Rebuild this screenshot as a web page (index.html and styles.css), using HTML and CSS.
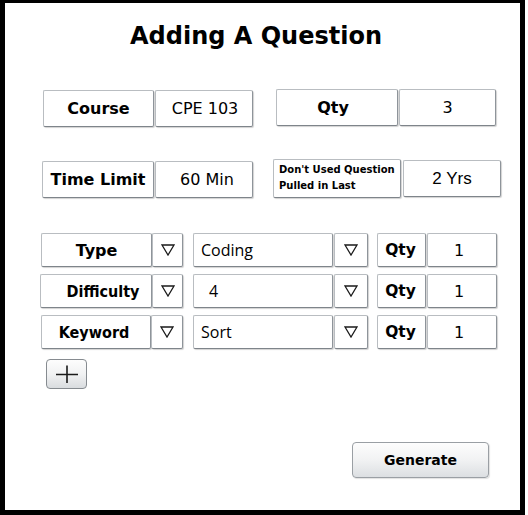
FILE: index.html
```html
<!DOCTYPE html>
<html>
<head>
<meta charset="utf-8">
<link rel="stylesheet" href="styles.css">
</head>
<body>
<div class="frame">
  <h1 class="title">Adding A Question</h1>

  <div class="row row1">
    <div class="box lbl course">Course</div>
    <div class="box val cpe">CPE 103</div>
    <div class="box lbl qty1">Qty</div>
    <div class="box val three">3</div>
  </div>

  <div class="row row2">
    <div class="box lbl time">Time Limit</div>
    <div class="box val min">60 Min</div>
    <div class="box lbl small dont">Don't Used Question<br>Pulled in Last</div>
    <div class="box val yrs">2 Yrs</div>
  </div>

  <div class="row crit first">
    <div class="box lbl clabel">Type</div>
    <div class="box tri"><svg width="14" height="12" viewBox="0 0 14 12"><polygon points="1,1 13,1 7,11" fill="none" stroke="#1a1a1a" stroke-width="1.3"/></svg></div>
    <div class="box field">Coding</div>
    <div class="box tri tri2"><svg width="14" height="12" viewBox="0 0 14 12"><polygon points="1,1 13,1 7,11" fill="none" stroke="#1a1a1a" stroke-width="1.3"/></svg></div>
    <div class="box lbl cqty">Qty</div>
    <div class="box val cnum">1</div>
  </div>

  <div class="row crit">
    <div class="box lbl clabel diff">Difficulty</div>
    <div class="box tri"><svg width="14" height="12" viewBox="0 0 14 12"><polygon points="1,1 13,1 7,11" fill="none" stroke="#1a1a1a" stroke-width="1.3"/></svg></div>
    <div class="box field indent">4</div>
    <div class="box tri tri2"><svg width="14" height="12" viewBox="0 0 14 12"><polygon points="1,1 13,1 7,11" fill="none" stroke="#1a1a1a" stroke-width="1.3"/></svg></div>
    <div class="box lbl cqty">Qty</div>
    <div class="box val cnum">1</div>
  </div>

  <div class="row crit">
    <div class="box lbl clabel kw">Keyword</div>
    <div class="box tri trikw"><svg width="14" height="12" viewBox="0 0 14 12"><polygon points="1,1 13,1 7,11" fill="none" stroke="#1a1a1a" stroke-width="1.3"/></svg></div>
    <div class="box field">Sort</div>
    <div class="box tri tri2"><svg width="14" height="12" viewBox="0 0 14 12"><polygon points="1,1 13,1 7,11" fill="none" stroke="#1a1a1a" stroke-width="1.3"/></svg></div>
    <div class="box lbl cqty">Qty</div>
    <div class="box val cnum">1</div>
  </div>

  <button class="plus" type="button"><svg width="24" height="20" viewBox="0 0 24 20"><path d="M1 10.5H23M12 1.5V19" stroke="#1a1a1a" stroke-width="1.6" fill="none"/></svg></button>

  <button class="generate" type="button">Generate</button>
</div>
</body>
</html>
```
FILE: styles.css
```css
html, body {
  margin: 0;
  padding: 0;
  background: #ffffff;
}

.frame {
  box-sizing: border-box;
  width: 525px;
  height: 515px;
  border-style: solid;
  border-color: #000;
  border-width: 3px 5px 5px 5px;
  background: #fff;
  display: flex;
  flex-direction: column;
  align-items: flex-start;
  font-family: "DejaVu Sans", Verdana, sans-serif;
  color: #000;
}

.title {
  margin: 19px 0 0 125px;
  font-size: 24px;
  line-height: 28px;
  font-weight: bold;
  white-space: nowrap;
}

.row {
  display: flex;
  align-items: flex-start;
}

.box {
  box-sizing: border-box;
  display: flex;
  align-items: center;
  justify-content: center;
  background: #fff;
  border: 1px solid;
  border-color: #b9bdc1 #8e949a #7e848a #b9bdc1;
  border-radius: 2px;
  box-shadow: 1px 1px 1px rgba(0, 0, 0, 0.18);
  white-space: nowrap;
}

.lbl {
  font-weight: bold;
  font-size: 16px;
}

.val {
  font-size: 16px;
}

/* Row 1 */
.row1 {
  margin: 39px 0 0 38px;
  height: 38px;
}
.course { width: 111px; height: 37px; margin-top: 1px; }
.cpe { width: 98px; height: 37px; margin: 1px 0 0 1px; padding-left: 2px; }
.qty1 { width: 122px; height: 37px; margin-left: 23px; padding-right: 8px; }
.three { width: 97px; height: 37px; margin-left: 1px; }

/* Row 2 */
.row2 {
  margin: 31px 0 0 37px;
  height: 40px;
}
.time { width: 112px; height: 37px; margin-top: 3px; }
.min { width: 98px; height: 37px; margin: 3px 0 0 1px; padding-left: 6px; }
.small {
  font-size: 10px;
  line-height: 16px;
  justify-content: flex-start;
  text-align: left;
  padding-left: 5px;
  padding-bottom: 1px;
}
.dont { width: 128px; height: 39px; margin: 1px 0 0 20px; }
.yrs { width: 98px; height: 37px; margin: 2px 0 0 2px; font-size: 17px; font-family: "Liberation Sans", Arial, sans-serif; }

/* Criteria rows */
.crit {
  margin: 7px 0 0 36px;
  height: 34px;
}
.crit.first { margin-top: 35px; }
.crit .box { height: 34px; }
.clabel { width: 111px; }
.diff {
  margin-left: -1px;
  width: 112px;
  font-family: "DejaVu Sans Condensed", "DejaVu Sans", sans-serif;
  font-stretch: condensed;
  padding-left: 14px;
}
.kw {
  width: 110px;
  font-family: "DejaVu Sans Condensed", "DejaVu Sans", sans-serif;
  font-stretch: condensed;
  padding-right: 4px;
}
.tri { width: 31px; }
.trikw { width: 32px; }
.field {
  width: 140px;
  margin-left: 10px;
  justify-content: flex-start;
  padding-left: 7px;
  font-family: "Open Sans", "Noto Sans", sans-serif;
  font-size: 16px;
}
.field.indent { padding-left: 15px; }
.tri2 { width: 34px; margin-left: 1px; }
.cqty { width: 49px; margin-left: 9px; font-size: 15.5px; padding-right: 2px; }
.cnum { width: 70px; margin-left: 1px; padding-right: 6px; }

/* Buttons */
.plus {
  margin: 10px 0 0 41px;
  width: 41px;
  height: 30px;
  padding: 0;
  border: 1px solid #868b90;
  border-radius: 4px;
  background: linear-gradient(#fdfdfd, #f1f2f3 50%, #d9dcdf);
  display: flex;
  align-items: center;
  justify-content: center;
}

.generate {
  margin: 53px 0 0 347px;
  width: 137px;
  height: 36px;
  padding: 0;
  border: 1px solid #9a9fa4;
  border-radius: 4px;
  background: linear-gradient(#fdfdfd, #f1f2f3 50%, #dcdfe2);
  font-family: "DejaVu Sans", Verdana, sans-serif;
  font-weight: bold;
  font-size: 14px;
  color: #000;
  box-shadow: 1px 1px 1px rgba(0, 0, 0, 0.12);
}
```
